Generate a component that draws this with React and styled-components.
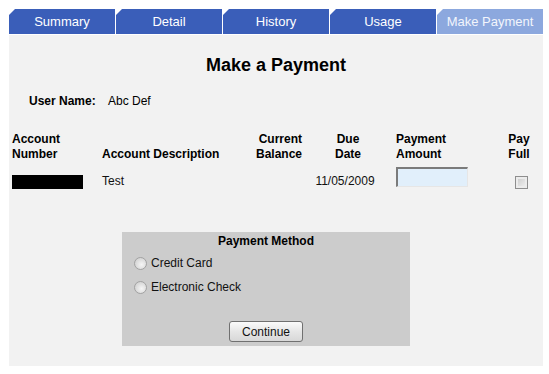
import React from "react";
import styled, { createGlobalStyle } from "styled-components";

const Global = createGlobalStyle`
  html, body { margin: 0; padding: 0; background: #ffffff; }
  body { font-family: "Liberation Sans", Arial, sans-serif; font-size: 12px; color: #000; }
`;

const Page = styled.div`
  padding: 9px 6px 9px 9px;
  width: 534px;
`;

const TabBar = styled.div`
  display: flex;
  gap: 1px;
  margin-bottom: 1px;
`;

const Tab = styled.div`
  width: 106px;
  height: 25px;
  display: flex;
  align-items: center;
  justify-content: center;
  font-size: 13px;
  color: ${(p) => (p.$active ? "#f2f5fc" : "#ffffff")};
  background: ${(p) => (p.$active ? "#8ca8de" : "#3a5eb9")};
  clip-path: polygon(6px 0, 100% 0, 100% 100%, 0 100%, 0 6px);
  box-sizing: border-box;
`;

const Panel = styled.div`
  background: #f2f2f2;
  padding: 20px 0 20px 3px;
`;

const Title = styled.h1`
  margin: 0;
  font-size: 18px;
  line-height: 21px;
  font-weight: bold;
  text-align: center;
  padding-right: 3px;
`;

const UserLine = styled.div`
  display: flex;
  margin: 18px 0 0 17px;
  line-height: 15px;
`;

const UserLabel = styled.span`
  font-weight: bold;
  width: 79px;
`;

const Grid = styled.div`
  display: grid;
  grid-template-columns: 90px 148px 54px 88px 104px 46px;
  margin-top: 23px;
  line-height: 15px;
`;

const Head = styled.div`
  font-weight: bold;
  align-self: end;
  text-align: ${(p) => p.$align || "left"};
  padding-left: ${(p) => p.$pl || 0}px;
  padding-right: ${(p) => p.$pr || 0}px;
`;

const Cell = styled.div`
  margin-top: 5px;
  height: 22px;
  display: flex;
  align-items: ${(p) => p.$valign || "flex-end"};
  justify-content: ${(p) => p.$justify || "flex-start"};
  padding-left: ${(p) => p.$pl || 0}px;
  padding-right: ${(p) => p.$pr || 0}px;
  padding-bottom: ${(p) => p.$pb || 0}px;
  color: #111;
`;

const Masked = styled.div`
  width: 71px;
  height: 14px;
  background: #000;
`;

const AmountInput = styled.input`
  width: 72px;
  height: 20px;
  box-sizing: border-box;
  margin: 0;
  background: #e1effb;
  border-style: solid;
  border-width: 2px 1px 1px 2px;
  border-color: #7b7b7b #e6e6e6 #e6e6e6 #7b7b7b;
  outline: none;
`;

const Check = styled.input`
  appearance: none;
  width: 13px;
  height: 13px;
  margin: 0 0 0 5px;
  box-sizing: border-box;
  border: 1px solid #8e8e8e;
  background: linear-gradient(135deg, #c8c8c8, #f4f4f4);
  box-shadow: inset 0 0 0 2px #ececec;
`;

const MethodBox = styled.div`
  margin: 41px 0 0 110px;
  width: 288px;
  background: #cccccc;
  padding: 2px 0 4px;
  display: flex;
  flex-direction: column;
`;

const MethodTitle = styled.div`
  font-weight: bold;
  line-height: 15px;
  text-align: center;
  margin-bottom: 2px;
`;

const RadioRow = styled.label`
  display: flex;
  align-items: center;
  height: 24px;
  padding-left: 12px;
  color: #111;
  font-size: 12px;
`;

const Radio = styled.input`
  appearance: none;
  width: 13px;
  height: 13px;
  margin: 0 4px 0 0;
  border-radius: 50%;
  border: 1px solid #a2a2a2;
  background: radial-gradient(circle at 60% 60%, #f6f6f6 0%, #d6d6d6 70%, #c4c4c4 100%);
  box-sizing: border-box;
`;

const Button = styled.button`
  align-self: center;
  margin-top: 22px;
  width: 74px;
  height: 21px;
  font-family: "Liberation Sans", Arial, sans-serif;
  font-size: 12px;
  color: #111;
  border: 1px solid #707070;
  border-radius: 3px;
  background: linear-gradient(#fbfbfb, #e6e6e6 50%, #d8d8d8);
  padding: 0;
`;

const tabs = ["Summary", "Detail", "History", "Usage", "Make Payment"];

export default function App() {
  return (
    <Page>
      <Global />
      <TabBar>
        {tabs.map((t, i) => (
          <Tab key={t} $active={i === 4}>{t}</Tab>
        ))}
      </TabBar>
      <Panel>
        <Title>Make a Payment</Title>
        <UserLine>
          <UserLabel>User Name:</UserLabel>
          <span>Abc Def</span>
        </UserLine>
        <Grid>
          <Head>Account<br />Number</Head>
          <Head>Account Description</Head>
          <Head $align="right" $pr={2}>Current<br />Balance</Head>
          <Head $align="center">Due<br />Date</Head>
          <Head $pl={4}>Payment<br />Amount</Head>
          <Head $align="center">Pay<br />Full</Head>

          <Cell $pb={1}><Masked /></Cell>
          <Cell>Test</Cell>
          <Cell />
          <Cell $justify="center" $pr={6}>11/05/2009</Cell>
          <Cell $valign="flex-start" $pl={4}><AmountInput type="text" /></Cell>
          <Cell $justify="center" $pb={2}><Check type="checkbox" /></Cell>
        </Grid>
        <MethodBox>
          <MethodTitle>Payment Method</MethodTitle>
          <RadioRow><Radio type="radio" name="pm" />Credit Card</RadioRow>
          <RadioRow><Radio type="radio" name="pm" />Electronic Check</RadioRow>
          <Button>Continue</Button>
        </MethodBox>
      </Panel>
    </Page>
  );
}
